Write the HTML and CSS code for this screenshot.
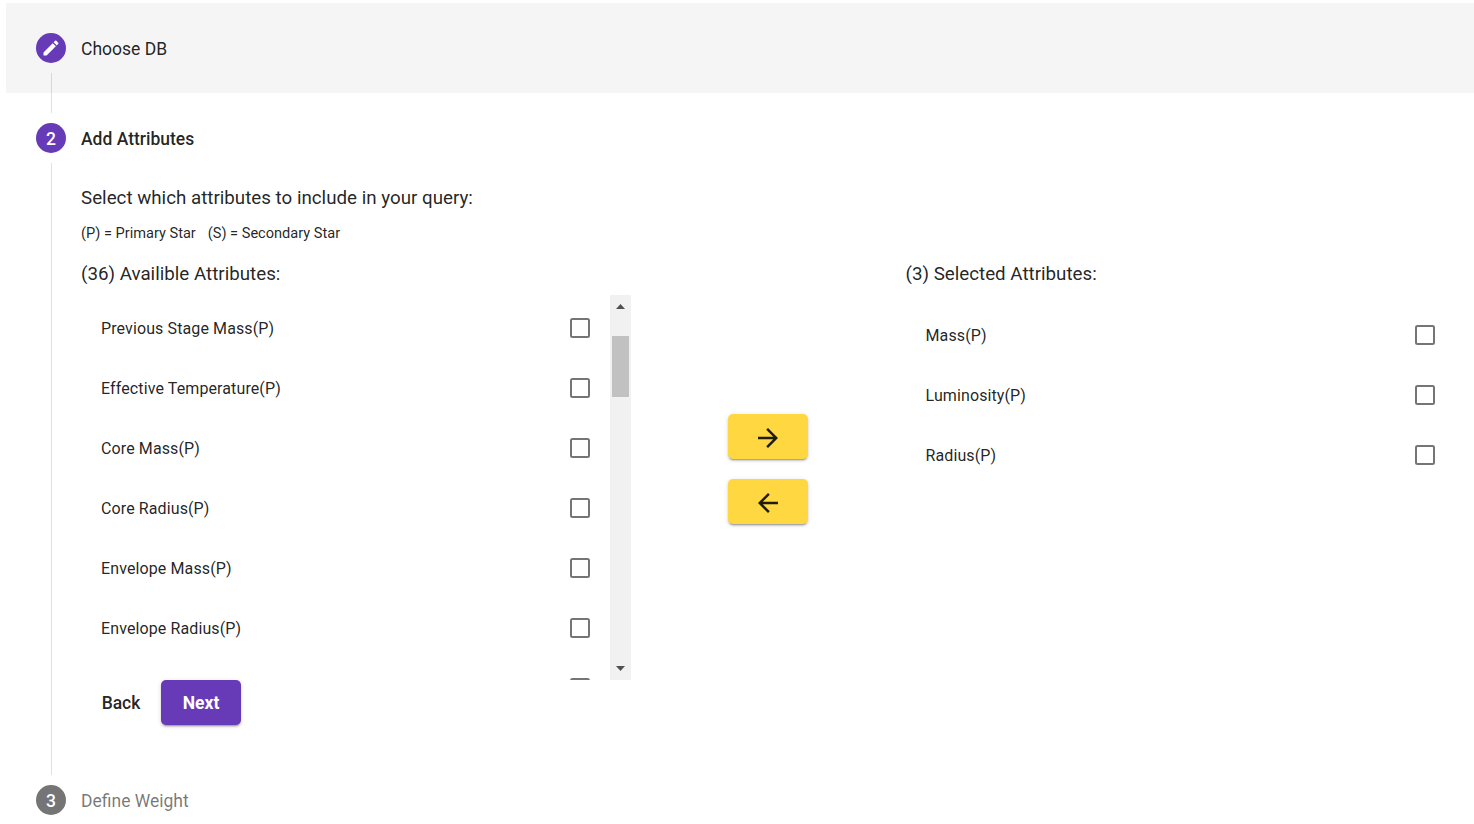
FILE: index.html
```html
<!DOCTYPE html>
<html lang="en">
<head>
<meta charset="utf-8">
<title>Query builder</title>
<link rel="stylesheet" href="styles.css">
</head>
<body>
<main class="stepper">
  <section class="step">
    <header class="step-header visited">
      <span class="step-icon"><svg width="20" height="20" viewBox="0 0 24 24" fill="#fff"><path d="M3 17.25V21h3.75L17.81 9.94l-3.75-3.75L3 17.25zM20.71 7.04c.39-.39.39-1.02 0-1.41l-2.34-2.34c-.39-.39-1.02-.39-1.41 0l-1.83 1.83 3.75 3.75 1.83-1.83z"/></svg></span>
      <span class="step-label">Choose DB</span>
    </header>
  </section>
  <section class="step active">
    <header class="step-header">
      <span class="step-icon"><span class="step-number">2</span></span>
      <span class="step-label">Add Attributes</span>
    </header>
    <div class="step-content">
      <h1 class="prompt">Select which attributes to include in your query:</h1>
      <p class="legend"><span>(P) = Primary Star</span><span class="legend-second">(S) = Secondary Star</span></p>
      <div class="picker">
        <div class="column">
          <h2 class="list-title available-title">(36) Availible Attributes:</h2>
          <div class="scroll-area">
            <ul class="list available">
              <li class="row"><span>Previous Stage Mass(P)</span><i class="checkbox"></i></li>
              <li class="row"><span>Effective Temperature(P)</span><i class="checkbox"></i></li>
              <li class="row"><span>Core Mass(P)</span><i class="checkbox"></i></li>
              <li class="row"><span>Core Radius(P)</span><i class="checkbox"></i></li>
              <li class="row"><span>Envelope Mass(P)</span><i class="checkbox"></i></li>
              <li class="row"><span>Envelope Radius(P)</span><i class="checkbox"></i></li>
              <li class="row"><span></span><i class="checkbox"></i></li>
            </ul>
            <div class="scrollbar">
              <svg class="arrow" width="21" height="21" viewBox="0 0 21 21"><path d="M6 14h9L10.500 9z" fill="#505050"/></svg>
              <div class="track"><div class="thumb"></div></div>
              <svg class="arrow" width="21" height="21" viewBox="0 0 21 21"><path d="M6 7h9L10.500 12z" fill="#505050"/></svg>
            </div>
          </div>
        </div>
        <div class="transfer">
          <button class="button accent" aria-label="Add"><svg width="30" height="30" viewBox="0 0 24 24"><path d="M12 4l-1.410 1.410L16.170 11H4v2h12.170l-5.580 5.590L12 20l8-8z"/></svg></button>
          <button class="button accent" aria-label="Remove"><svg width="30" height="30" viewBox="0 0 24 24"><path d="M20 11H7.830l5.590-5.590L12 4l-8 8 8 8 1.410-1.410L7.830 13H20v-2z"/></svg></button>
        </div>
        <div class="column">
          <h2 class="list-title selected-title">(3) Selected Attributes:</h2>
          <ul class="list selected">
            <li class="row"><span>Mass(P)</span><i class="checkbox"></i></li>
            <li class="row"><span>Luminosity(P)</span><i class="checkbox"></i></li>
            <li class="row"><span>Radius(P)</span><i class="checkbox"></i></li>
          </ul>
        </div>
      </div>
      <div class="actions">
        <button class="button back">Back</button>
        <button class="button primary">Next</button>
      </div>
    </div>
  </section>
  <section class="step pending">
    <header class="step-header">
      <span class="step-icon"><span class="step-number">3</span></span>
      <span class="step-label">Define Weight</span>
    </header>
  </section>
</main>
</body>
</html>
```
FILE: styles.css
```css
* { box-sizing: border-box; }
html, body { height: 100%; overflow: hidden; }
body {
  margin: 0;
  background: #fff;
  color: rgba(0, 0, 0, 0.87);
  font-family: Roboto, "Liberation Sans", sans-serif;
}
h1, h2, p, ul { margin: 0; padding: 0; font-weight: 400; }
.stepper { padding: 3px 0 0 6px; }
.step { position: relative; }
.step-header {
  display: flex;
  align-items: center;
  gap: 15px;
  height: 90px;
  padding-left: 30px;
  font-size: 17.5px;
}
.visited { background: #f5f5f5; }
.step-icon {
  display: flex;
  align-items: center;
  justify-content: center;
  width: 30px;
  height: 30px;
  border-radius: 50%;
  background: #673ab7;
  color: #fff;
  font-weight: 500;
}
.step-number { padding-top: 2px; }
.step-label { line-height: 30px; padding-top: 1px; }
.active .step-label { font-weight: 500; }
.pending .step-label { color: rgba(0, 0, 0, 0.54); }
.pending .step-icon { background: #757575; }

/* Connector running from one step circle to the next */
.step:not(.pending)::after {
  content: "";
  position: absolute;
  left: 45px;
  top: 70px;
  bottom: -20px;
  width: 1px;
  background: rgba(0, 0, 0, 0.12);
}
.step-content { height: 572px; padding: 0 19px 0 75px; }
.prompt { height: 30px; line-height: 30px; font-size: 18.75px; }
.legend { display: flex; gap: 12px; height: 40px; line-height: 41px; font-size: 14.580px; }
.picker { display: grid; grid-template-columns: 550px 1fr 549.5px; height: 427px; }
.list-title { height: 42px; line-height: 42px; font-size: 18.75px; }
.scroll-area { display: flex; height: 385px; overflow: hidden; }
.list { flex: 1; list-style: none; }
.available { padding-top: 3px; }
.selected { padding-top: 10px; }
.row {
  display: flex;
  align-items: center;
  justify-content: space-between;
  height: 60px;
  padding: 0 20px;
  font-size: 16px;
  letter-spacing: 0.11px;
}
.checkbox { width: 20px; height: 20px; border: 2px solid #757575; border-radius: 2.500px; }
.scrollbar { display: flex; flex-direction: column; width: 21px; background: #f1f1f1; }
.arrow { display: block; }
.track { flex: 1; padding: 20px 2px 0; }
.thumb { height: 61px; background: #c1c1c1; }
.transfer { display: flex; flex-direction: column; align-items: center; gap: 20px; padding-top: 161px; }
.button {
  display: flex;
  align-items: center;
  justify-content: center;
  width: 80px;
  height: 45px;
  padding: 0;
  border: 0;
  border-radius: 5px;
  background: transparent;
  color: rgba(0, 0, 0, 0.87);
  font: 500 17.5px Roboto, sans-serif;
}
.accent, .primary {
  box-shadow: 0 3px 1px -2px rgba(0, 0, 0, 0.2), 0 2px 2px 0 rgba(0, 0, 0, 0.14), 0 1px 5px 0 rgba(0, 0, 0, 0.12);
}
.accent { background: #ffd740; }
.accent svg { fill: rgba(0, 0, 0, 0.87); position: relative; top: 1px; }
.primary { background: #673ab7; color: #fff; font-weight: 700; }
.actions { display: flex; }
```
